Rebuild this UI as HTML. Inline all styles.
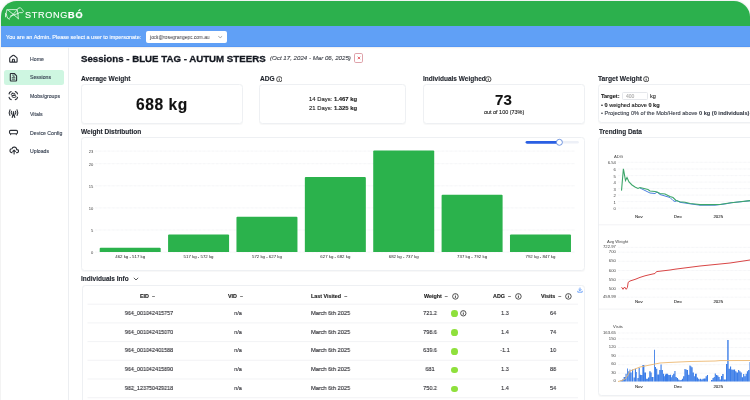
<!DOCTYPE html>
<html><head><meta charset="utf-8"><style>
html,body{margin:0;padding:0;width:750px;height:400px;overflow:hidden;background:#fff;font-family:"Liberation Sans", sans-serif}
body{position:relative}
svg text{font-family:"Liberation Sans", sans-serif}
.t{position:absolute;white-space:nowrap;line-height:1;will-change:transform;-webkit-text-stroke:0.12px currentColor}
.box{position:absolute}
#frame{position:absolute;left:0.6px;top:0.6px;width:749.3px;height:430px;border-radius:15.5px 16px 8px 8px;overflow:hidden;box-shadow:0 0 2.5px rgba(0,0,0,0.15);background:#fff}
#hdr{position:absolute;left:0;top:0;width:100%;height:25.6px;background:#2cb04d}
#adm{position:absolute;left:0;top:25.6px;width:100%;height:20.6px;background:#60a0f6;box-shadow:inset 0 -0.6px 0 #4f90f2, 0 0.8px 1.2px rgba(0,0,0,0.07)}
#side{position:absolute;left:68px;top:46.8px;width:1px;height:360px;background:#eceef1}
</style></head><body>
<div id="frame"><div id="hdr"></div><div id="adm"></div></div><div id="side"></div><svg style="position:absolute;left:0;top:0" width="30" height="25" viewBox="0 0 30 25" fill="none" stroke="#f4fff6" stroke-width="0.8" stroke-linejoin="round" stroke-linecap="round">
<path d="M7 9.8 Q12 9.4 17.1 9.7 L18.2 8.2 L20.4 7.7 L22 9.4 L23.5 11.3 L22.4 12.7 L19.4 12.6 L17.9 13.5 L18.3 18.8 M7 9.8 Q6 12 6.3 13.5 Q6.6 16.5 7.8 18.4 L9.6 19.1 M5.5 13.3 V16.9 M8.5 10.5 L18.2 18.4 M16.8 10.5 L9.6 18 M17.9 13.5 L10.4 16.1 M17.1 9.7 L17.9 13.5"/>
</svg><div class="t" style="left:24.5px;top:10.6px;font-size:9.1px;font-weight:400;color:#fff;letter-spacing:0.7px;-webkit-text-stroke:0.12px #fff">STRONG<b style="-webkit-text-stroke:0.25px #fff">BÓ</b></div>
<div class="t" style="left:5.9px;top:35.0px;font-size:5.5px;font-weight:400;color:#fff;">You are an Admin. Please select a user to impersonate:</div>
<div class="box" style="left:145.6px;top:30.6px;width:81px;height:12.8px;background:#fff;border-radius:2px"></div><div class="t" style="left:150px;top:35.3px;font-size:5.3px;font-weight:400;color:#2e2e36;transform:scaleX(0.9);transform-origin:0 0;-webkit-text-stroke:0">jock@rosegrangepc.com.au</div>
<svg style="position:absolute;left:217px;top:35px" width="6" height="4" viewBox="217 35 6 4"><path d="M218.3 36.3 L220.2 37.7 L222.1 36.3" stroke="#8a8a8a" stroke-width="0.75" fill="none"/></svg><div class="box" style="left:4.2px;top:69.5px;width:59.8px;height:15px;background:#cef6e1;border-radius:2.5px"></div><div class="t" style="left:30.1px;top:57.3px;font-size:5.2px;font-weight:400;color:#374151;">Home</div>
<div class="t" style="left:30.1px;top:75.3px;font-size:5.2px;font-weight:400;color:#374151;">Sessions</div>
<div class="t" style="left:30.1px;top:93.8px;font-size:5.2px;font-weight:400;color:#374151;">Mobs/groups</div>
<div class="t" style="left:30.1px;top:112.3px;font-size:5.2px;font-weight:400;color:#374151;">Vitals</div>
<div class="t" style="left:30.1px;top:130.8px;font-size:5.2px;font-weight:400;color:#374151;">Device Config</div>
<div class="t" style="left:30.1px;top:148.8px;font-size:5.2px;font-weight:400;color:#374151;">Uploads</div>
<svg style="position:absolute;left:6px;top:52px" width="16" height="15" viewBox="6 52 16 15" stroke="#2b2f36" stroke-width="1.1" fill="none" stroke-linecap="round" stroke-linejoin="round"><path d="M9.7 58.6 Q9.7 57.9 10.3 57.4 L12.7 55.5 Q13.4 55 14.1 55.5 L16.5 57.4 Q17.1 57.9 17.1 58.6 V61.4 Q17.1 62.1 16.4 62.1 H10.4 Q9.7 62.1 9.7 61.4 Z M12.4 62.1 V59.9 Q12.4 59.3 13 59.3 H13.8 Q14.4 59.3 14.4 59.9 V62.1" stroke-width="1.1"/></svg><svg style="position:absolute;left:6px;top:70px" width="16" height="15" viewBox="6 70 16 15" stroke="#2b2f36" stroke-width="1.1" fill="none" stroke-linecap="round" stroke-linejoin="round"><path d="M10.9 73.5 H14.3 L16.6 75.8 V80.4 Q16.6 81.0 16.0 81.0 H10.9 Q10.3 81.0 10.3 80.4 V74.1 Q10.3 73.5 10.9 73.5 Z" stroke-width="1.1"/><path d="M13.0 74.6 V76.2 H14.4 M12.2 77.7 H14.9 M12.2 79.2 H14.9" stroke-width="0.8"/></svg><svg style="position:absolute;left:6px;top:88px" width="16" height="15" viewBox="6 88 16 15" stroke="#2b2f36" stroke-width="1.1" fill="none" stroke-linecap="round" stroke-linejoin="round"><path d="M9.1 93.9 Q9.2 92 11.1 91.6 M15.3 91.6 Q17.2 92 17.5 93.8 M9.1 97.3 Q9.4 99.2 11.2 99.6 M15.3 99.6 Q17.2 99.2 17.5 97.3" stroke-width="1.15"/><rect x="11.3" y="93.3" width="3.7" height="2.2" rx="1.1" stroke-width="0.95"/><rect x="12.1" y="95.3" width="3.8" height="2.1" rx="1.05" stroke-width="0.95"/></svg><svg style="position:absolute;left:6px;top:106px" width="16" height="15" viewBox="6 106 16 15" stroke="#2b2f36" stroke-width="1.1" fill="none" stroke-linecap="round" stroke-linejoin="round"><path d="M10 109.8 Q8.5 112.6 10 115.4 M17 109.8 Q18.5 112.6 17 115.4 M11.5 111.2 Q10.8 112.6 11.5 114 M15.5 111.2 Q16.2 112.6 15.5 114 M13.5 112.4 L12.2 117.5 M13.5 112.4 L14.8 117.5 M12.7 115.6 H14.3" stroke-width="1.05"/><circle cx="13.5" cy="112" r="0.75" fill="#2b2f36" stroke="none"/></svg><svg style="position:absolute;left:6px;top:125px" width="16" height="15" viewBox="6 125 16 15" stroke="#2b2f36" stroke-width="1.1" fill="none" stroke-linecap="round" stroke-linejoin="round"><path d="M10.6 130.4 H16.4 Q17.5 130.4 17.5 131.5 V132.6 Q17.5 133.7 16.4 133.7 H10.6 Q9.5 133.7 9.5 132.6 V131.5 Q9.5 130.4 10.6 130.4 Z M10.6 133.8 V134.6 M16.3 133.8 V134.6" stroke-width="1.1"/></svg><svg style="position:absolute;left:8.5px;top:145.0px" width="10.2" height="10.2" viewBox="0 0 24 24" fill="none" stroke="#2b2f36" stroke-width="2.6" stroke-linecap="round" stroke-linejoin="round"><path d="M7 18a4.6 4.4 0 0 1 0 -9a5 4.5 0 0 1 11 2h1a3.5 3.5 0 0 1 0 7h-1 M9 15l3 -3l3 3 M12 12l0 9"/></svg><div class="t" style="left:80.9px;top:53.7px;font-size:9.7px;font-weight:700;color:#141821;-webkit-text-stroke:0.3px currentColor">Sessions - BLUE TAG - AUTUM STEERS</div>
<div class="t" style="left:270px;top:54.6px;font-size:6.15px;font-weight:400;color:#3b3f47;font-style:italic">(Oct 17, 2024 - Mar 06, 2025)</div>
<div class="box" style="left:354.2px;top:53.2px;width:8.6px;height:9.4px;border:0.75px solid #dfa2aa;border-radius:1.8px;box-sizing:border-box"></div><svg style="position:absolute;left:354.5px;top:53.9px" width="8" height="8" viewBox="0 0 8 8"><path d="M2.7 2.7 L5.2 5.2 M5.2 2.7 L2.7 5.2" stroke="#e0464f" stroke-width="0.8"/></svg><div class="t" style="left:81.3px;top:76.4px;font-size:6.6px;font-weight:700;color:#1f232b;">Average Weight</div>
<div class="t" style="left:260.1px;top:76.4px;font-size:6.6px;font-weight:700;color:#1f232b;">ADG</div>
<svg style="position:absolute;left:275.9px;top:75.9px" width="6.6000000000000005" height="6.6000000000000005" viewBox="-3.3000000000000003 -3.3000000000000003 6.6000000000000005 6.6000000000000005"><circle r="2.7" fill="none" stroke="#333" stroke-width="0.85"/><path d="M0 -0.5 V1.5" stroke="#333" stroke-width="0.9"/><circle cy="-1.4" r="0.48" fill="#333"/></svg><div class="t" style="left:423.2px;top:76.4px;font-size:6.5px;font-weight:700;color:#1f232b;">Individuals Weighed</div>
<svg style="position:absolute;left:485.3px;top:75.9px" width="6.6000000000000005" height="6.6000000000000005" viewBox="-3.3000000000000003 -3.3000000000000003 6.6000000000000005 6.6000000000000005"><circle r="2.7" fill="none" stroke="#333" stroke-width="0.85"/><path d="M0 -0.5 V1.5" stroke="#333" stroke-width="0.9"/><circle cy="-1.4" r="0.48" fill="#333"/></svg><div class="t" style="left:598.2px;top:76.4px;font-size:6.7px;font-weight:700;color:#1f232b;">Target Weight</div>
<svg style="position:absolute;left:642.6999999999999px;top:76.00000000000001px" width="6.4" height="6.4" viewBox="-3.2 -3.2 6.4 6.4"><circle r="2.6" fill="none" stroke="#333" stroke-width="0.85"/><path d="M0 -0.5 V1.5" stroke="#333" stroke-width="0.9"/><circle cy="-1.4" r="0.48" fill="#333"/></svg><div class="box" style="left:80.8px;top:84.2px;width:162px;height:39.4px;border:1px solid #eef0f3;border-radius:3.5px;background:#fff;box-sizing:border-box;box-shadow:0 0.5px 1px rgba(0,0,0,0.03)"></div><div class="box" style="left:259.3px;top:84.2px;width:147px;height:39.4px;border:1px solid #eef0f3;border-radius:3.5px;background:#fff;box-sizing:border-box;box-shadow:0 0.5px 1px rgba(0,0,0,0.03)"></div><div class="box" style="left:423px;top:84.2px;width:161.8px;height:39.4px;border:1px solid #eef0f3;border-radius:3.5px;background:#fff;box-sizing:border-box;box-shadow:0 0.5px 1px rgba(0,0,0,0.03)"></div><div class="box" style="left:598px;top:84.2px;width:170px;height:39.2px;border:1px solid #eef0f3;border-radius:3.5px;background:#fff;box-sizing:border-box;box-shadow:0 0.5px 1px rgba(0,0,0,0.03)"></div><div class="t" style="left:136.3px;top:96.6px;font-size:15.6px;font-weight:700;color:#111;letter-spacing:0.55px">688 kg</div>
<div class="t" style="left:308.5px;top:96.6px;font-size:5.9px;font-weight:400;color:#222;">14 Days: <b>1.467 kg</b></div>
<div class="t" style="left:308.5px;top:106.1px;font-size:5.9px;font-weight:400;color:#222;">21 Days: <b>1.325 kg</b></div>
<div class="t" style="left:495px;top:92.1px;font-size:15.1px;font-weight:700;color:#111;">73</div>
<div class="t" style="left:483.8px;top:109.9px;font-size:5.45px;font-weight:400;color:#222;">out of 100 (73%)</div>
<div class="t" style="left:601px;top:94.0px;font-size:5.6px;font-weight:400;color:#222;"><b>Target:</b></div>
<div class="box" style="left:621.6px;top:91.8px;width:26px;height:8.7px;border:0.6px solid #e5e7eb;border-radius:1.5px;box-sizing:border-box"></div><div class="t" style="left:626px;top:94.2px;font-size:5.0px;font-weight:400;color:#aaa;">400</div>
<div class="t" style="left:650px;top:94.2px;font-size:5.6px;font-weight:400;color:#333;">kg</div>
<div class="t" style="left:601px;top:102.5px;font-size:5.6px;font-weight:400;color:#222;">• <b>0</b> weighed above <b>0 kg</b></div>
<div class="t" style="left:601px;top:110.6px;font-size:5.6px;font-weight:400;color:#3a3f4a;">• Projecting 0% of the Mob/Herd above <b>0 kg (0 individuals)</b></div>
<div class="t" style="left:81.3px;top:128.8px;font-size:6.55px;font-weight:700;color:#1f232b;">Weight Distribution</div>
<div class="box" style="left:81px;top:136.6px;width:503.5px;height:134.9px;border:1px solid #eef0f3;border-radius:3.5px;background:#fff;box-sizing:border-box;box-shadow:0 0.5px 1px rgba(0,0,0,0.03)"></div><svg style="position:absolute;left:0;top:0" width="750" height="400"><line x1="95" y1="151.10" x2="575" y2="151.10" stroke="#e6e8ec" stroke-width="0.6" stroke-dasharray="0.7 0.6"/><text x="93.2" y="153.00" font-size="4.1" text-anchor="end" fill="#444">23</text><line x1="95" y1="163.70" x2="575" y2="163.70" stroke="#e6e8ec" stroke-width="0.6" stroke-dasharray="0.7 0.6"/><text x="93.2" y="165.60" font-size="4.1" text-anchor="end" fill="#444">20</text><line x1="95" y1="185.80" x2="575" y2="185.80" stroke="#e6e8ec" stroke-width="0.6" stroke-dasharray="0.7 0.6"/><text x="93.2" y="187.70" font-size="4.1" text-anchor="end" fill="#444">15</text><line x1="95" y1="207.90" x2="575" y2="207.90" stroke="#e6e8ec" stroke-width="0.6" stroke-dasharray="0.7 0.6"/><text x="93.2" y="209.80" font-size="4.1" text-anchor="end" fill="#444">10</text><line x1="95" y1="230.00" x2="575" y2="230.00" stroke="#e6e8ec" stroke-width="0.6" stroke-dasharray="0.7 0.6"/><text x="93.2" y="231.90" font-size="4.1" text-anchor="end" fill="#444">5</text><line x1="95" y1="252.10" x2="575" y2="252.10" stroke="#e6e8ec" stroke-width="0.6" stroke-dasharray="0.7 0.6"/><text x="93.2" y="254.00" font-size="4.1" text-anchor="end" fill="#444">0</text><path d="M99.70 252.10 V248.68 Q99.70 247.68 100.70 247.68 H159.70 Q160.70 247.68 160.70 248.68 V252.10 Z" fill="#2bb24c"/><text x="130.20" y="258.1" font-size="4.35" text-anchor="middle" fill="#222">462 kg - 517 kg</text><path d="M168.08 252.10 V235.42 Q168.08 234.42 169.08 234.42 H228.08 Q229.08 234.42 229.08 235.42 V252.10 Z" fill="#2bb24c"/><text x="198.58" y="258.1" font-size="4.35" text-anchor="middle" fill="#222">517 kg - 572 kg</text><path d="M236.46 252.10 V217.74 Q236.46 216.74 237.46 216.74 H296.46 Q297.46 216.74 297.46 217.74 V252.10 Z" fill="#2bb24c"/><text x="266.96" y="258.1" font-size="4.35" text-anchor="middle" fill="#222">572 kg - 627 kg</text><path d="M304.84 252.10 V177.96 Q304.84 176.96 305.84 176.96 H364.84 Q365.84 176.96 365.84 177.96 V252.10 Z" fill="#2bb24c"/><text x="335.34" y="258.1" font-size="4.35" text-anchor="middle" fill="#222">627 kg - 682 kg</text><path d="M373.22 252.10 V151.44 Q373.22 150.44 374.22 150.44 H433.22 Q434.22 150.44 434.22 151.44 V252.10 Z" fill="#2bb24c"/><text x="403.72" y="258.1" font-size="4.35" text-anchor="middle" fill="#222">682 kg - 737 kg</text><path d="M441.60 252.10 V195.64 Q441.60 194.64 442.60 194.64 H501.60 Q502.60 194.64 502.60 195.64 V252.10 Z" fill="#2bb24c"/><text x="472.10" y="258.1" font-size="4.35" text-anchor="middle" fill="#222">737 kg - 792 kg</text><path d="M509.98 252.10 V235.42 Q509.98 234.42 510.98 234.42 H569.98 Q570.98 234.42 570.98 235.42 V252.10 Z" fill="#2bb24c"/><text x="540.48" y="258.1" font-size="4.35" text-anchor="middle" fill="#222">792 kg - 847 kg</text><line x1="526" y1="142.3" x2="577.5" y2="142.3" stroke="#edf0f7" stroke-width="2.6" stroke-linecap="round"/><line x1="527" y1="142.3" x2="559.3" y2="142.3" stroke="#2a5fe3" stroke-width="2.7" stroke-linecap="round"/><circle cx="559.4" cy="142.3" r="3.0" fill="#fff" stroke="#5a84da" stroke-width="0.85"/></svg><div class="t" style="left:81.3px;top:275.5px;font-size:6.5px;font-weight:700;color:#1f232b;">Individuals Info</div>
<svg style="position:absolute;left:132.5px;top:276.5px" width="6" height="4" viewBox="0 0 6 4"><path d="M0.8 0.8 L3 3 L5.2 0.8" stroke="#333" stroke-width="0.8" fill="none"/></svg><div class="box" style="left:81.5px;top:284.5px;width:503px;height:140px;border:1px solid #eef0f3;border-radius:3.5px;background:#fff;box-sizing:border-box;box-shadow:0 0.5px 1px rgba(0,0,0,0.03)"></div><svg style="position:absolute;left:0;top:0" width="750" height="400"><line x1="87.5" y1="304.2" x2="578" y2="304.2" stroke="#eceef1" stroke-width="0.7"/><line x1="87.5" y1="322.9" x2="578" y2="322.9" stroke="#eceef1" stroke-width="0.7"/><line x1="87.5" y1="341.6" x2="578" y2="341.6" stroke="#eceef1" stroke-width="0.7"/><line x1="87.5" y1="360.3" x2="578" y2="360.3" stroke="#eceef1" stroke-width="0.7"/><line x1="87.5" y1="379.0" x2="578" y2="379.0" stroke="#eceef1" stroke-width="0.7"/><line x1="87.5" y1="397.7" x2="578" y2="397.7" stroke="#eceef1" stroke-width="0.7"/></svg><svg style="position:absolute;left:452.09999999999997px;top:292.9px" width="6.8" height="6.8" viewBox="-3.4 -3.4 6.8 6.8"><circle r="2.8" fill="none" stroke="#333" stroke-width="0.85"/><path d="M0 -0.5 V1.5" stroke="#333" stroke-width="0.9"/><circle cy="-1.4" r="0.48" fill="#333"/></svg><svg style="position:absolute;left:515.0px;top:292.9px" width="6.8" height="6.8" viewBox="-3.4 -3.4 6.8 6.8"><circle r="2.8" fill="none" stroke="#333" stroke-width="0.85"/><path d="M0 -0.5 V1.5" stroke="#333" stroke-width="0.9"/><circle cy="-1.4" r="0.48" fill="#333"/></svg><svg style="position:absolute;left:565.4px;top:292.9px" width="6.8" height="6.8" viewBox="-3.4 -3.4 6.8 6.8"><circle r="2.8" fill="none" stroke="#333" stroke-width="0.85"/><path d="M0 -0.5 V1.5" stroke="#333" stroke-width="0.9"/><circle cy="-1.4" r="0.48" fill="#333"/></svg><svg style="position:absolute;left:576.5px;top:286.5px" width="6" height="6" viewBox="0 0 6 6"><path d="M3 0.6 V3.6 M1.6 2.3 L3 3.7 L4.4 2.3 M0.8 3.8 V5.2 H5.2 V3.8" stroke="#3b82f6" stroke-width="0.7" fill="none"/></svg><div class="t" style="left:139.8px;top:293.6px;font-size:5.4px;font-weight:700;color:#222;">EID&nbsp; –</div>
<div class="t" style="left:227.9px;top:293.6px;font-size:5.4px;font-weight:700;color:#222;">VID&nbsp; –</div>
<div class="t" style="left:310.5px;top:293.6px;font-size:5.4px;font-weight:700;color:#222;">Last Visited&nbsp; –</div>
<div class="t" style="left:424.3px;top:293.6px;font-size:5.4px;font-weight:700;color:#222;">Weight&nbsp; –</div>
<div class="t" style="left:493.2px;top:293.6px;font-size:5.4px;font-weight:700;color:#222;">ADG&nbsp; –</div>
<div class="t" style="left:541.2px;top:293.6px;font-size:5.4px;font-weight:700;color:#222;">Visits&nbsp; –</div>
<div class="t" style="left:149.2px;top:310.65000000000003px;font-size:5.75px;font-weight:400;color:#2a2a30;transform:translateX(-50%) scaleX(0.945)">964_001042415757</div>
<div class="t" style="left:237.5px;top:310.65000000000003px;font-size:5.75px;font-weight:400;color:#2a2a30;transform:translateX(-50%) scaleX(0.945)">n/a</div>
<div class="t" style="left:310.7px;top:310.65000000000003px;font-size:5.85px;font-weight:400;color:#2a2a30;transform:scaleX(0.965);transform-origin:0 0">March 6th 2025</div>
<div class="t" style="left:429.6px;top:310.65000000000003px;font-size:5.75px;font-weight:400;color:#2a2a30;transform:translateX(-50%) scaleX(0.945)">721.2</div>
<div class="t" style="left:504.5px;top:310.65000000000003px;font-size:5.75px;font-weight:400;color:#2a2a30;transform:translateX(-50%) scaleX(0.945)">1.3</div>
<div class="t" style="left:553.2px;top:310.65000000000003px;font-size:5.75px;font-weight:400;color:#2a2a30;transform:translateX(-50%) scaleX(0.945)">64</div>
<div class="box" style="left:450.95px;top:310.2px;width:6.7px;height:6.7px;border-radius:50%;background:#8fe03c"></div><svg style="position:absolute;left:460.0px;top:310.25px" width="6.6000000000000005" height="6.6000000000000005" viewBox="-3.3000000000000003 -3.3000000000000003 6.6000000000000005 6.6000000000000005"><circle r="2.7" fill="none" stroke="#333" stroke-width="0.85"/><path d="M0 -0.5 V1.5" stroke="#333" stroke-width="0.9"/><circle cy="-1.4" r="0.48" fill="#333"/></svg><div class="t" style="left:149.2px;top:329.50000000000006px;font-size:5.75px;font-weight:400;color:#2a2a30;transform:translateX(-50%) scaleX(0.945)">964_001042415070</div>
<div class="t" style="left:237.5px;top:329.50000000000006px;font-size:5.75px;font-weight:400;color:#2a2a30;transform:translateX(-50%) scaleX(0.945)">n/a</div>
<div class="t" style="left:310.7px;top:329.50000000000006px;font-size:5.85px;font-weight:400;color:#2a2a30;transform:scaleX(0.965);transform-origin:0 0">March 6th 2025</div>
<div class="t" style="left:429.6px;top:329.50000000000006px;font-size:5.75px;font-weight:400;color:#2a2a30;transform:translateX(-50%) scaleX(0.945)">798.6</div>
<div class="t" style="left:504.5px;top:329.50000000000006px;font-size:5.75px;font-weight:400;color:#2a2a30;transform:translateX(-50%) scaleX(0.945)">1.4</div>
<div class="t" style="left:553.2px;top:329.50000000000006px;font-size:5.75px;font-weight:400;color:#2a2a30;transform:translateX(-50%) scaleX(0.945)">74</div>
<div class="box" style="left:450.95px;top:329.05px;width:6.7px;height:6.7px;border-radius:50%;background:#8fe03c"></div><div class="t" style="left:149.2px;top:348.35px;font-size:5.75px;font-weight:400;color:#2a2a30;transform:translateX(-50%) scaleX(0.945)">964_001042401588</div>
<div class="t" style="left:237.5px;top:348.35px;font-size:5.75px;font-weight:400;color:#2a2a30;transform:translateX(-50%) scaleX(0.945)">n/a</div>
<div class="t" style="left:310.7px;top:348.35px;font-size:5.85px;font-weight:400;color:#2a2a30;transform:scaleX(0.965);transform-origin:0 0">March 6th 2025</div>
<div class="t" style="left:429.6px;top:348.35px;font-size:5.75px;font-weight:400;color:#2a2a30;transform:translateX(-50%) scaleX(0.945)">639.6</div>
<div class="t" style="left:504.5px;top:348.35px;font-size:5.75px;font-weight:400;color:#2a2a30;transform:translateX(-50%) scaleX(0.945)">-1.1</div>
<div class="t" style="left:553.2px;top:348.35px;font-size:5.75px;font-weight:400;color:#2a2a30;transform:translateX(-50%) scaleX(0.945)">10</div>
<div class="box" style="left:450.95px;top:347.9px;width:6.7px;height:6.7px;border-radius:50%;background:#8fe03c"></div><div class="t" style="left:149.2px;top:367.20000000000005px;font-size:5.75px;font-weight:400;color:#2a2a30;transform:translateX(-50%) scaleX(0.945)">964_001042415890</div>
<div class="t" style="left:237.5px;top:367.20000000000005px;font-size:5.75px;font-weight:400;color:#2a2a30;transform:translateX(-50%) scaleX(0.945)">n/a</div>
<div class="t" style="left:310.7px;top:367.20000000000005px;font-size:5.85px;font-weight:400;color:#2a2a30;transform:scaleX(0.965);transform-origin:0 0">March 6th 2025</div>
<div class="t" style="left:429.6px;top:367.20000000000005px;font-size:5.75px;font-weight:400;color:#2a2a30;transform:translateX(-50%) scaleX(0.945)">681</div>
<div class="t" style="left:504.5px;top:367.20000000000005px;font-size:5.75px;font-weight:400;color:#2a2a30;transform:translateX(-50%) scaleX(0.945)">1.3</div>
<div class="t" style="left:553.2px;top:367.20000000000005px;font-size:5.75px;font-weight:400;color:#2a2a30;transform:translateX(-50%) scaleX(0.945)">88</div>
<div class="box" style="left:450.95px;top:366.75px;width:6.7px;height:6.7px;border-radius:50%;background:#8fe03c"></div><div class="t" style="left:149.2px;top:386.05000000000007px;font-size:5.75px;font-weight:400;color:#2a2a30;transform:translateX(-50%) scaleX(0.945)">982_123750429218</div>
<div class="t" style="left:237.5px;top:386.05000000000007px;font-size:5.75px;font-weight:400;color:#2a2a30;transform:translateX(-50%) scaleX(0.945)">n/a</div>
<div class="t" style="left:310.7px;top:386.05000000000007px;font-size:5.85px;font-weight:400;color:#2a2a30;transform:scaleX(0.965);transform-origin:0 0">March 6th 2025</div>
<div class="t" style="left:429.6px;top:386.05000000000007px;font-size:5.75px;font-weight:400;color:#2a2a30;transform:translateX(-50%) scaleX(0.945)">750.2</div>
<div class="t" style="left:504.5px;top:386.05000000000007px;font-size:5.75px;font-weight:400;color:#2a2a30;transform:translateX(-50%) scaleX(0.945)">1.4</div>
<div class="t" style="left:553.2px;top:386.05000000000007px;font-size:5.75px;font-weight:400;color:#2a2a30;transform:translateX(-50%) scaleX(0.945)">54</div>
<div class="box" style="left:450.95px;top:385.6px;width:6.7px;height:6.7px;border-radius:50%;background:#8fe03c"></div><div class="t" style="left:598.7px;top:128.8px;font-size:6.45px;font-weight:700;color:#1f232b;">Trending Data</div>
<div class="box" style="left:598px;top:136.6px;width:170px;height:259px;border:1px solid #eef0f3;border-radius:3.5px;background:#fff;box-sizing:border-box;box-shadow:0 0.5px 1px rgba(0,0,0,0.03)"></div><svg style="position:absolute;left:0;top:0" width="750" height="400"><line x1="598" y1="224.8" x2="750" y2="224.8" stroke="#eceef1" stroke-width="0.7"/><line x1="598" y1="309.1" x2="750" y2="309.1" stroke="#eceef1" stroke-width="0.7"/><text x="614" y="158.2" font-size="4.2" fill="#444">ADG</text><line x1="618" y1="162.3" x2="750" y2="162.3" stroke="#e8eaee" stroke-width="0.6" stroke-dasharray="0.7 0.6"/><text x="615.8" y="164.3" font-size="4.2" text-anchor="end" fill="#444">6.54</text><line x1="618" y1="169" x2="750" y2="169" stroke="#e8eaee" stroke-width="0.6" stroke-dasharray="0.7 0.6"/><text x="615.8" y="171.0" font-size="4.2" text-anchor="end" fill="#444">6</text><line x1="618" y1="175.6" x2="750" y2="175.6" stroke="#e8eaee" stroke-width="0.6" stroke-dasharray="0.7 0.6"/><text x="615.8" y="177.6" font-size="4.2" text-anchor="end" fill="#444">5</text><line x1="618" y1="182.1" x2="750" y2="182.1" stroke="#e8eaee" stroke-width="0.6" stroke-dasharray="0.7 0.6"/><text x="615.8" y="184.1" font-size="4.2" text-anchor="end" fill="#444">4</text><line x1="618" y1="188.6" x2="750" y2="188.6" stroke="#e8eaee" stroke-width="0.6" stroke-dasharray="0.7 0.6"/><text x="615.8" y="190.6" font-size="4.2" text-anchor="end" fill="#444">3</text><line x1="618" y1="195.1" x2="750" y2="195.1" stroke="#e8eaee" stroke-width="0.6" stroke-dasharray="0.7 0.6"/><text x="615.8" y="197.1" font-size="4.2" text-anchor="end" fill="#444">2</text><line x1="618" y1="201.6" x2="750" y2="201.6" stroke="#e8eaee" stroke-width="0.6" stroke-dasharray="0.7 0.6"/><text x="615.8" y="203.6" font-size="4.2" text-anchor="end" fill="#444">1</text><line x1="618" y1="208.1" x2="750" y2="208.1" stroke="#e8eaee" stroke-width="0.6" stroke-dasharray="0.7 0.6"/><text x="615.8" y="210.1" font-size="4.2" text-anchor="end" fill="#444">0</text><text x="638.8" y="218.1" font-size="4.4" text-anchor="middle" fill="#333" stroke="#333" stroke-width="0.1">Nov</text><text x="677.7" y="218.1" font-size="4.4" text-anchor="middle" fill="#333" stroke="#333" stroke-width="0.1">Dec</text><text x="718.3" y="218.1" font-size="4.4" text-anchor="middle" fill="#333" stroke="#333" stroke-width="0.1">2025</text><polyline points="640,188 645,190.5 650,193 655,193.5 657,192 660,194.5 665,196 670,197.5 673,200.5 675,201.5 677,200.6 680,202.3 690,203.8 700,205.2 715,205.2 726,203.8 731,202.8 750,200.8" fill="none" stroke="#4a7fe0" stroke-width="1"/><polyline points="621.5,190.6 623.4,168.8 625.5,180.6 627,177.5 629,182 632,185 635,187 638,188.5 640,187.5 644,188.5 648,189.5 650,191 655,191.5 657,192 660,193.5 665,194 670,196.5 673,197.5 676,200.5 680,201.8 685,202.2 690,203.5 695,204 700,204.6 710,204.6 720,204.5 726,203.5 731,202.8 740,201.8 750,200.6" fill="none" stroke="#3da66a" stroke-width="1.1"/><text x="607" y="242.6" font-size="4.2" fill="#444">Avg Weight</text><line x1="618" y1="247.4" x2="750" y2="247.4" stroke="#e8eaee" stroke-width="0.6" stroke-dasharray="0.7 0.6"/><text x="615.8" y="248.4" font-size="4.2" text-anchor="end" fill="#444">722.97</text><line x1="618" y1="252.2" x2="750" y2="252.2" stroke="#e8eaee" stroke-width="0.6" stroke-dasharray="0.7 0.6"/><text x="615.8" y="253.2" font-size="4.2" text-anchor="end" fill="#444">700</text><line x1="618" y1="261.3" x2="750" y2="261.3" stroke="#e8eaee" stroke-width="0.6" stroke-dasharray="0.7 0.6"/><text x="615.8" y="262.3" font-size="4.2" text-anchor="end" fill="#444">650</text><line x1="618" y1="270.5" x2="750" y2="270.5" stroke="#e8eaee" stroke-width="0.6" stroke-dasharray="0.7 0.6"/><text x="615.8" y="271.5" font-size="4.2" text-anchor="end" fill="#444">600</text><line x1="618" y1="279.7" x2="750" y2="279.7" stroke="#e8eaee" stroke-width="0.6" stroke-dasharray="0.7 0.6"/><text x="615.8" y="280.7" font-size="4.2" text-anchor="end" fill="#444">550</text><line x1="618" y1="288.9" x2="750" y2="288.9" stroke="#e8eaee" stroke-width="0.6" stroke-dasharray="0.7 0.6"/><text x="615.8" y="289.9" font-size="4.2" text-anchor="end" fill="#444">500</text><line x1="618" y1="297.2" x2="750" y2="297.2" stroke="#e8eaee" stroke-width="0.6" stroke-dasharray="0.7 0.6"/><text x="615.8" y="298.2" font-size="4.2" text-anchor="end" fill="#444">459.99</text><text x="638.8" y="303.1" font-size="4.4" text-anchor="middle" fill="#333" stroke="#333" stroke-width="0.1">Nov</text><text x="677.7" y="303.1" font-size="4.4" text-anchor="middle" fill="#333" stroke="#333" stroke-width="0.1">Dec</text><text x="718.3" y="303.1" font-size="4.4" text-anchor="middle" fill="#333" stroke="#333" stroke-width="0.1">2025</text><polyline points="621.6,287.2 623,289.3 624.6,287 626.2,289.3 627.4,287.5 628.2,282.3 630,281 635,279.4 640,277.4 645,275.8 650,274.6 655,273.5 656.5,271.6 660,271.2 670,270 675,269.2 700,266 730,263 750,260" fill="none" stroke="#d63b3b" stroke-width="0.95"/><text x="613" y="327.9" font-size="4.2" fill="#444">Visits</text><line x1="618" y1="333" x2="750" y2="333" stroke="#e8eaee" stroke-width="0.6" stroke-dasharray="0.7 0.6"/><text x="615.8" y="333.6" font-size="4.2" text-anchor="end" fill="#444">163.65</text><line x1="618" y1="338.9" x2="750" y2="338.9" stroke="#e8eaee" stroke-width="0.6" stroke-dasharray="0.7 0.6"/><text x="615.8" y="339.5" font-size="4.2" text-anchor="end" fill="#444">150</text><line x1="618" y1="347.5" x2="750" y2="347.5" stroke="#e8eaee" stroke-width="0.6" stroke-dasharray="0.7 0.6"/><text x="615.8" y="348.1" font-size="4.2" text-anchor="end" fill="#444">120</text><line x1="618" y1="356.1" x2="750" y2="356.1" stroke="#e8eaee" stroke-width="0.6" stroke-dasharray="0.7 0.6"/><text x="615.8" y="356.70000000000005" font-size="4.2" text-anchor="end" fill="#444">90</text><line x1="618" y1="364.7" x2="750" y2="364.7" stroke="#e8eaee" stroke-width="0.6" stroke-dasharray="0.7 0.6"/><text x="615.8" y="365.3" font-size="4.2" text-anchor="end" fill="#444">60</text><line x1="618" y1="373.2" x2="750" y2="373.2" stroke="#e8eaee" stroke-width="0.6" stroke-dasharray="0.7 0.6"/><text x="615.8" y="373.8" font-size="4.2" text-anchor="end" fill="#444">30</text><line x1="618" y1="381.7" x2="750" y2="381.7" stroke="#e8eaee" stroke-width="0.6" stroke-dasharray="0.7 0.6"/><text x="615.8" y="382.3" font-size="4.2" text-anchor="end" fill="#444">0</text><text x="638.8" y="388.1" font-size="4.4" text-anchor="middle" fill="#333" stroke="#333" stroke-width="0.1">Nov</text><text x="677.7" y="388.1" font-size="4.4" text-anchor="middle" fill="#333" stroke="#333" stroke-width="0.1">Dec</text><text x="718.3" y="388.1" font-size="4.4" text-anchor="middle" fill="#333" stroke="#333" stroke-width="0.1">2025</text><path d="M620.50 381.6 V380.25 H621.88 V381.6 Z M622.00 381.6 V379.38 H623.50 V381.6 Z M623.62 381.6 V376.88 H625.38 V381.6 Z M625.50 381.6 V373.75 H626.63 V381.6 Z M627.00 381.6 V368.50 H627.88 V381.6 Z M628.25 381.6 V371.25 H629.38 V381.6 Z M629.50 381.6 V369.38 H630.38 V381.6 Z M630.50 381.6 V372.50 H631.63 V381.6 Z M632.00 381.6 V369.38 H633.13 V381.6 Z M633.62 381.6 V377.50 H634.75 V381.6 Z M634.88 381.6 V368.75 H636.00 V381.6 Z M636.12 381.6 V371.88 H636.88 V381.6 Z M637.38 381.6 V378.12 H638.50 V381.6 Z M638.62 381.6 V367.75 H639.75 V381.6 Z M639.88 381.6 V374.75 H641.00 V381.6 Z M641.12 381.6 V375.00 H642.25 V381.6 Z M642.38 381.6 V365.00 H644.38 V381.6 Z M644.50 381.6 V372.50 H646.00 V381.6 Z M646.12 381.6 V378.75 H647.88 V381.6 Z M648.00 381.6 V377.50 H649.13 V381.6 Z M649.25 381.6 V371.25 H650.63 V381.6 Z M650.75 381.6 V372.50 H651.63 V381.6 Z M651.75 381.6 V376.88 H653.50 V381.6 Z M654.00 381.6 V349.75 H654.88 V381.6 Z M655.00 381.6 V366.88 H656.00 V381.6 Z M656.12 381.6 V368.75 H657.25 V381.6 Z M657.38 381.6 V374.38 H659.13 V381.6 Z M659.25 381.6 V370.00 H660.38 V381.6 Z M660.50 381.6 V364.38 H661.63 V381.6 Z M661.75 381.6 V370.00 H662.88 V381.6 Z M663.00 381.6 V373.75 H664.13 V381.6 Z M664.25 381.6 V376.25 H665.38 V381.6 Z M665.50 381.6 V373.75 H667.88 V381.6 Z M665.00 381.6 V374.75 H666.13 V381.6 Z M666.25 381.6 V374.00 H667.38 V381.6 Z M667.50 381.6 V374.75 H668.63 V381.6 Z M668.75 381.6 V375.00 H669.88 V381.6 Z M670.00 381.6 V374.75 H671.13 V381.6 Z M671.25 381.6 V377.25 H672.00 V381.6 Z M672.12 381.6 V375.25 H673.00 V381.6 Z M673.12 381.6 V373.75 H674.25 V381.6 Z M674.38 381.6 V371.00 H675.50 V381.6 Z M675.62 381.6 V376.88 H676.75 V381.6 Z M676.88 381.6 V378.12 H678.00 V381.6 Z M678.12 381.6 V379.38 H679.25 V381.6 Z M679.38 381.6 V380.25 H680.50 V381.6 Z M680.62 381.6 V380.00 H681.75 V381.6 Z M681.88 381.6 V378.75 H683.00 V381.6 Z M683.12 381.6 V376.25 H684.25 V381.6 Z M684.38 381.6 V369.00 H685.50 V381.6 Z M685.62 381.6 V369.38 H686.75 V381.6 Z M686.88 381.6 V370.00 H688.00 V381.6 Z M688.12 381.6 V374.75 H689.25 V381.6 Z M689.38 381.6 V365.62 H690.50 V381.6 Z M690.62 381.6 V366.25 H691.38 V381.6 Z M691.50 381.6 V367.25 H692.63 V381.6 Z M692.75 381.6 V372.50 H693.88 V381.6 Z M694.00 381.6 V376.25 H694.88 V381.6 Z M695.00 381.6 V373.75 H696.75 V381.6 Z M696.88 381.6 V377.50 H698.00 V381.6 Z M698.12 381.6 V378.75 H699.25 V381.6 Z M699.38 381.6 V379.38 H699.88 V381.6 Z M700.00 381.6 V378.75 H701.13 V381.6 Z M701.25 381.6 V379.38 H702.38 V381.6 Z M702.50 381.6 V378.75 H703.63 V381.6 Z M703.75 381.6 V378.50 H705.50 V381.6 Z M705.62 381.6 V376.25 H706.75 V381.6 Z M706.88 381.6 V375.00 H708.00 V381.6 Z M711.00 381.6 V380.00 H712.38 V381.6 Z M712.50 381.6 V378.12 H713.63 V381.6 Z M713.75 381.6 V376.88 H714.63 V381.6 Z M714.75 381.6 V373.50 H715.88 V381.6 Z M716.00 381.6 V375.00 H717.13 V381.6 Z M717.25 381.6 V375.62 H718.38 V381.6 Z M718.50 381.6 V376.88 H719.63 V381.6 Z M719.75 381.6 V379.38 H720.88 V381.6 Z M721.00 381.6 V376.00 H722.13 V381.6 Z M722.25 381.6 V374.00 H723.63 V381.6 Z M723.75 381.6 V379.38 H725.88 V381.6 Z M726.00 381.6 V364.00 H727.13 V381.6 Z M727.25 381.6 V340.00 H728.63 V381.6 Z M728.75 381.6 V368.75 H729.88 V381.6 Z M730.00 381.6 V366.50 H731.13 V381.6 Z M731.25 381.6 V369.38 H732.38 V381.6 Z M732.50 381.6 V369.75 H733.63 V381.6 Z M733.75 381.6 V369.38 H735.13 V381.6 Z M735.25 381.6 V371.25 H736.38 V381.6 Z M736.50 381.6 V372.50 H738.00 V381.6 Z M738.12 381.6 V370.00 H739.25 V381.6 Z M739.38 381.6 V371.25 H740.50 V381.6 Z M740.62 381.6 V372.50 H741.75 V381.6 Z M741.88 381.6 V377.25 H743.00 V381.6 Z M743.12 381.6 V374.00 H744.25 V381.6 Z M744.38 381.6 V376.25 H745.50 V381.6 Z M745.62 381.6 V373.75 H746.75 V381.6 Z M746.88 381.6 V371.25 H748.00 V381.6 Z M748.12 381.6 V370.00 H749.25 V381.6 Z M749.38 381.6 V361.88 H749.88 V381.6 Z" fill="#3b7de8"/><polyline points="618,381.5 622,380.5 625,379 628,375 630,371 635,369 640,367 645,366 650,365 655,364 660,363 668,362.5 690,361.5 715,361 720,360.6 750,360.5" fill="none" stroke="#ecb870" stroke-width="0.9"/></svg>
</body></html>
